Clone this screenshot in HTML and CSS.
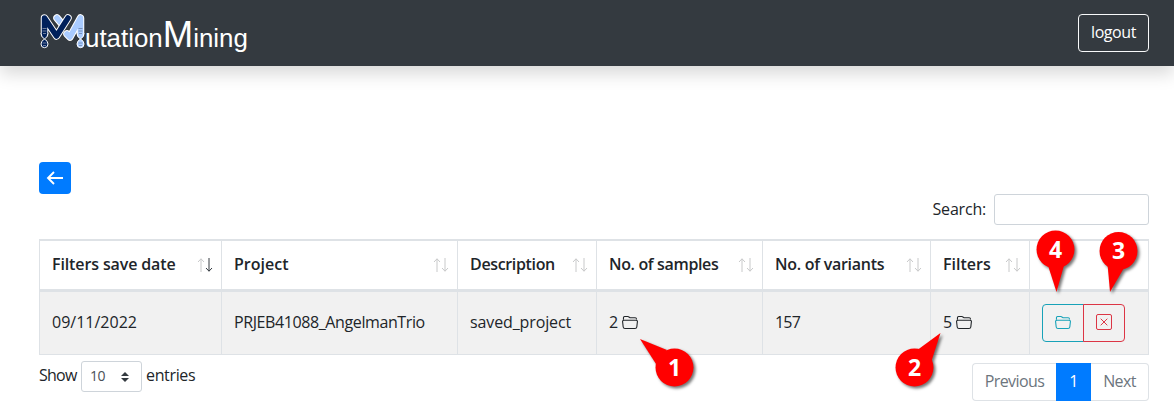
FILE: index.html
```html
<!DOCTYPE html>
<html lang="en">
<head>
<meta charset="utf-8">
<title>MutationMining</title>
<link rel="stylesheet" href="styles.css">
</head>
<body>
<svg class="defs" width="0" height="0">
  <symbol id="sort-up" viewBox="0 0 8 14"><path d="M4 14V.8M1 4L4 .8L7 4" fill="none" stroke="currentColor"/></symbol>
  <symbol id="sort-down" viewBox="0 0 8 14"><path d="M4 0V13.2M1 10L4 13.2L7 10" fill="none" stroke="currentColor"/></symbol>
  <symbol id="folder" viewBox="0 0 16 16"><path d="M1.400 4.800L1.500 2.500Q1.500 1.500 2.500 1.500H5.800Q6.500 1.500 7 2L8 2.700H13.200Q14.500 2.700 14.600 4.500M2.200 5.200H13.800Q15.600 5.200 15.400 6.800L14.800 12Q14.600 13.500 13 13.500H3Q1.400 13.500 1.200 12L.6 6.800Q.4 5.200 2.200 5.200Z" fill="none" stroke="currentColor" stroke-width="1.100"/></symbol>
</svg>
<header class="navbar">
  <a class="brand">
    <svg class="logo" width="46" height="36" viewBox="0 0 46 36">
      <g fill="none" stroke-linecap="round" stroke-linejoin="round">
        <path d="M17 4L22 10M27 20L30 23L40.500 4V20" stroke="#fff" stroke-width="7.500"/>
        <path d="M17 4L22 10M27 20L30 23L40.500 4V20" stroke="#a9cbff" stroke-width="5.500"/>
        <path d="M4.500 20V4L16.500 22L28 4" stroke="#fff" stroke-width="7.500"/>
        <path d="M4.500 20V4L16.500 22L28 4" stroke="#00205b" stroke-width="5.500"/>
      </g>
      <path d="M1 19Q1 23 4.500 25Q8 27 8 30A3.500 3.700 0 0 1 1 30Q1 27 4.500 25Q8 23 8 19" fill="#00205b" stroke="#fff"/>
      <path d="M37 19Q37 23 40.500 25Q44 27 44 30A3.500 3.700 0 0 1 37 30Q37 27 40.500 25Q44 23 44 19" fill="#a9cbff" stroke="#fff"/>
      <path d="M2.500 14.500H6.500M2.500 17H6.500M3 19.500H6M2.500 29H6.500M3 31.500H6" stroke="#8995ad" stroke-width=".8"/>
      <path d="M38.500 14.500H42.500M38.500 17H42.500M39 19.500H42M38.500 29H42.500M39 31.500H42" stroke="#6d83a8" stroke-width=".8"/>
    </svg>
    <span class="name">utation<span class="cap">M</span>ining</span>
  </a>
  <button class="logout">logout</button>
</header>
<main class="content">
  <button class="back" aria-label="Back"><svg width="20" height="20" viewBox="0 0 20 20"><path d="M18 10H3M9 4L3 10L9 16" fill="none" stroke="#fff" stroke-width="1.900"/></svg></button>
  <label class="search"><span class="t-search">Search:</span><input type="text"></label>
  <div class="table">
    <div class="row head">
      <div class="cell"><span class="h-date">Filters save date</span><span class="sort"><svg><use href="#sort-up"/></svg><svg class="active"><use href="#sort-down"/></svg></span></div>
      <div class="cell"><span class="h-project">Project</span><span class="sort"><svg><use href="#sort-up"/></svg><svg><use href="#sort-down"/></svg></span></div>
      <div class="cell"><span class="h-desc">Description</span><span class="sort"><svg><use href="#sort-up"/></svg><svg><use href="#sort-down"/></svg></span></div>
      <div class="cell"><span class="h-samples">No. of samples</span><span class="sort"><svg><use href="#sort-up"/></svg><svg><use href="#sort-down"/></svg></span></div>
      <div class="cell"><span class="h-variants">No. of variants</span><span class="sort"><svg><use href="#sort-up"/></svg><svg><use href="#sort-down"/></svg></span></div>
      <div class="cell"><span class="h-filters">Filters</span><span class="sort"><svg><use href="#sort-up"/></svg><svg><use href="#sort-down"/></svg></span></div>
      <div class="cell"></div>
    </div>
    <div class="row data">
      <div class="cell"><span class="d-date">09/11/2022</span></div>
      <div class="cell"><span class="d-project">PRJEB41088_AngelmanTrio</span></div>
      <div class="cell"><span class="d-desc">saved_project</span></div>
      <div class="cell"><span class="digit">2</span><svg class="folder"><use href="#folder"/></svg></div>
      <div class="cell"><span class="d-count">157</span></div>
      <div class="cell"><span class="digit">5</span><svg class="folder"><use href="#folder"/></svg></div>
      <div class="cell actions">
        <button class="open" aria-label="Open"><svg class="folder"><use href="#folder"/></svg></button>
        <button class="remove" aria-label="Delete"><svg width="16" height="16" viewBox="0 0 16 16" fill="none" stroke="currentColor"><rect x=".5" y=".5" width="15" height="15" rx="1.500"/><path d="M4.700 4.700L11.300 11.300M11.300 4.700L4.700 11.300"/></svg></button>
      </div>
    </div>
  </div>
  <div class="footer">
    <div class="length"><span class="t-show">Show</span><span class="select"><span>10</span><svg width="8" height="10" viewBox="0 0 8 10"><path d="M0 4L4 0L8 4ZM0 6H8L4 10Z" fill="#343a40"/></svg></span><span class="t-entries">entries</span></div>
    <nav class="pages"><a class="prev">Previous</a><a class="current">1</a><a class="next">Next</a></nav>
  </div>
</main>
<svg class="pins" width="1174" height="419" viewBox="0 0 1174 419">
  <g fill="#f00"><path d="M640 339L667 350L656 364Z"/><circle cx="674.500" cy="367.500" r="19"/></g>
  <g fill="#f00"><path d="M940.500 333L918 349.500L931.500 361Z"/><circle cx="914.500" cy="367.500" r="19"/></g>
  <g fill="#f00"><path d="M1056.500 292L1048 265.500H1064Z"/><circle cx="1055.500" cy="249.500" r="19"/></g>
  <g fill="#f00"><path d="M1110 292L1107.500 264L1124 268Z"/><circle cx="1118.500" cy="251" r="19"/></g>
  <g class="numbers"><text x="674.500" y="375.500">1</text><text x="914.500" y="375.500">2</text><text x="1055.500" y="257.500">4</text><text x="1118.500" y="259">3</text></g>
</svg>
</body>
</html>
```
FILE: styles.css
```css
* { box-sizing: border-box; }
body { margin: 0; width: 1174px; height: 419px; overflow: hidden; position: relative; background: #fff; color: #212529; font: 16px/24px "Open Sans", "Noto Sans", sans-serif; font-stretch: 88%; }
button, input { font: inherit; font-stretch: inherit; color: inherit; margin: 0; padding: 0; }
span, a { white-space: nowrap; }
.defs { position: absolute; }
.navbar { height: 66px; background: #343a40; display: flex; justify-content: space-between; align-items: flex-start; padding: 14px 25px 0 40px; color: #fff; box-shadow: 0 8px 16px rgba(0,0,0,.15); }
.brand { display: flex; align-items: flex-start; }
.logo { display: block; }
.name { font: 25.900px/42px "Liberation Sans", Arial, sans-serif; margin-left: -1px; }
.cap { font-size: 36.500px; }
.logout { width: 71px; height: 38px; padding-bottom: 2px; background: transparent; border: 1px solid #f8f9fa; border-radius: 4px; letter-spacing: -.45px; }
.content { padding: 96px 25px 0 39px; }
.back { display: flex; align-items: center; justify-content: center; width: 32px; height: 32px; border: 0; border-radius: 4px; background: #007bff; }
.search { display: flex; justify-content: flex-end; align-items: center; gap: 8px; height: 31px; }
.search input { width: 155px; height: 31px; border: 1px solid #ced4da; border-radius: 3px; }
.t-search { letter-spacing: -.2px; padding-bottom: 2px; }
.table { margin-top: 14px; width: 1110px; border-left: 1px solid #dee2e6; }
.row { display: grid; grid-template-columns: 182px 236px 139px 166px 168px 99px 119px; }
.cell { display: flex; align-items: center; padding-left: 12px; border-right: 1px solid #dee2e6; }
.cell > span:first-child { padding-bottom: 2px; }
.head { height: 53px; border-top: 2px solid #dee2e6; border-bottom: 3px solid #dee2e6; font-weight: 600; }
.head .cell { justify-content: space-between; padding-right: 8px; }
.data { height: 63px; background: #f1f1f1; border-bottom: 1px solid #dee2e6; }
.h-date { letter-spacing: -.12px; }
.h-desc { letter-spacing: -.35px; }
.h-samples { letter-spacing: -.35px; }
.h-variants { letter-spacing: -.27px; }
.d-project { letter-spacing: -.4px; }
.d-desc { letter-spacing: -.12px; }
.d-count { letter-spacing: -.8px; }
.sort { display: flex; color: #c8c9ca; }
.sort svg { width: 8px; height: 14px; }
.sort .active { color: #343a40; }
.digit { width: 9px; }
.folder { width: 16px; height: 16px; margin-left: 4px; }
.actions button { width: 42px; height: 38px; display: flex; align-items: center; justify-content: center; background: transparent; border: 1px solid; }
.actions .folder { margin: 0; }
.actions .remove svg { margin-top: -2px; }
.actions .open { color: #17a2b8; border-radius: 4px 0 0 4px; }
.actions .remove { color: #dc3545; border-radius: 0 4px 4px 0; margin-left: -1px; }
.footer { display: flex; justify-content: space-between; }
.length { display: flex; align-items: center; height: 31px; margin-top: 6px; }
.t-show { width: 42px; letter-spacing: -.75px; padding-bottom: 3px; }
.t-entries { letter-spacing: -.35px; padding-bottom: 3px; }
.select { width: 61px; height: 31px; display: flex; align-items: center; justify-content: space-between; border: 1px solid #ced4da; border-radius: 3px; padding: 0 12px 0 8px; margin-right: 4px; color: #495057; font-size: 14px; }
.select span { padding-bottom: 2px; letter-spacing: -.4px; }
.pages { display: flex; margin-top: 8px; height: 38px; color: #6c757d; line-height: 34px; text-align: center; letter-spacing: -.6px; }
.prev { width: 84px; border: 1px solid #dee2e6; border-radius: 4px 0 0 4px; border-right: 0; }
.current { width: 35px; background: #007bff; color: #fff; line-height: 36px; }
.next { width: 58px; border: 1px solid #dee2e6; border-radius: 0 4px 4px 0; border-left: 0; }
.pins { position: absolute; left: 0; top: 0; pointer-events: none; }
.pins g { filter: drop-shadow(2px 2px 1.500px rgba(0,0,0,.55)); }
.pins .numbers { filter: none; fill: #fff; font: 700 23px "Open Sans", sans-serif; font-stretch: 100%; text-anchor: middle; }
```
